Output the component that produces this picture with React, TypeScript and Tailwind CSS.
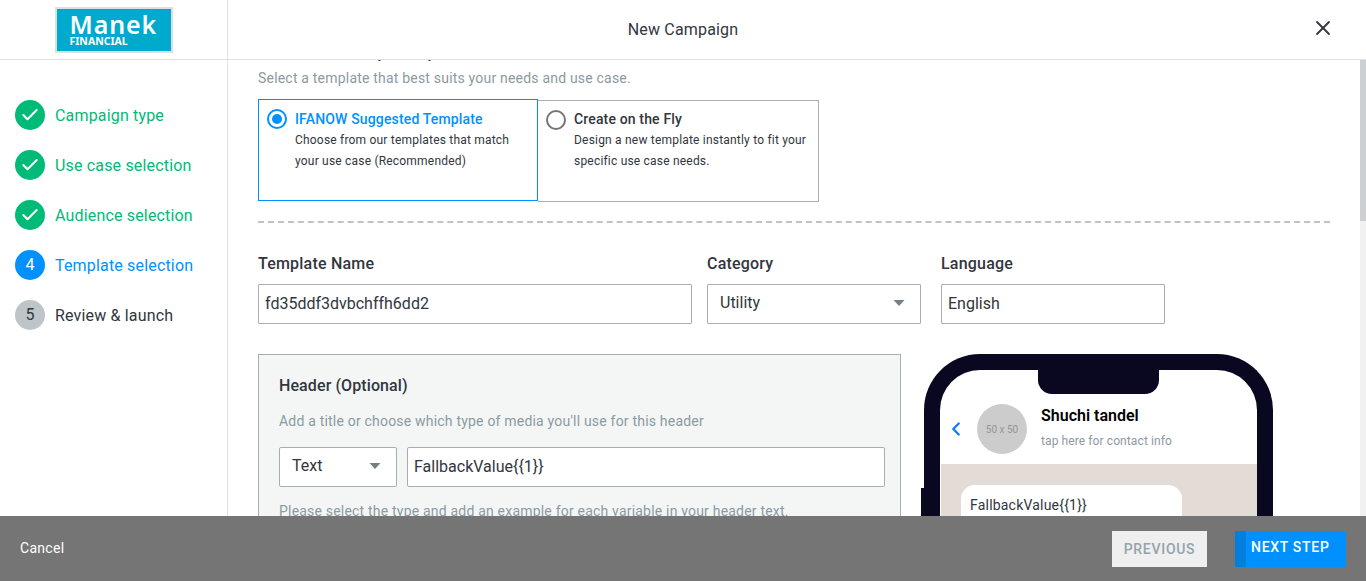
import React from "react";
import { Check, X, ChevronLeft } from "lucide-react";

const Caret = () => (
  <svg width="12" height="6" viewBox="0 0 12 6" className="shrink-0"><path d="M0.5 0H11.5L6 6Z" fill="#757f85" /></svg>
);

const steps = [
  { n: "", label: "Campaign type", state: "done" },
  { n: "", label: "Use case selection", state: "done" },
  { n: "", label: "Audience selection", state: "done" },
  { n: "4", label: "Template selection", state: "active" },
  { n: "5", label: "Review & launch", state: "todo" },
];

function Step({ s }: { s: (typeof steps)[number] }) {
  const circle = s.state === "done" ? "bg-[#00ba78] text-white" : s.state === "active" ? "bg-[#0091ff] text-white" : "bg-[#bdc5c9] text-[#32363d]";
  const text = s.state === "done" ? "text-[#00ba78]" : s.state === "active" ? "text-[#0091ff]" : "text-[#32363d]";
  return (
    <div className="flex h-[30px] items-center gap-[10px]">
      <div className={`flex h-[30px] w-[30px] items-center justify-center rounded-full text-base ${circle}`}>
        {s.state === "done" ? <Check size={20} strokeWidth={2.5} /> : s.n}
      </div>
      <span className={`pt-[2px] text-base tracking-[0.17px] ${text}`}>{s.label}</span>
    </div>
  );
}

export default function App() {
  return (
    <div className="flex h-[581px] w-[1366px] flex-col overflow-hidden bg-white font-['Roboto',sans-serif] text-[#32363d]">
      <header className="flex h-[60px] shrink-0 items-center border-b border-[#dfe1e2]">
        <div className="flex h-full w-[228px] shrink-0 items-center justify-center border-r border-[#dfe1e2]">
          <div className="flex h-[46px] w-[118px] flex-col border-2 border-[#dcdfe0] bg-[#00aacc] pl-[13px] pt-[3px] font-['Noto_Sans',sans-serif] text-white">
            <span className="text-[25px] font-semibold leading-[24px] tracking-[0.9px]">Manek</span>
            <span className="text-[10.5px] font-bold leading-[10px]">FINANCIAL</span>
          </div>
        </div>
        <div className="flex-1 text-center text-base tracking-[0.17px]">New Campaign</div>
        <div className="-mt-[3px] flex w-[228px] shrink-0 justify-end pr-[31px]">
          <X size={24} strokeWidth={1.8} />
        </div>
      </header>

      <main className="flex min-h-0 flex-1 overflow-hidden">
        <aside className="flex w-[228px] shrink-0 flex-col gap-[20px] border-r border-[#dfe1e2] pl-[15px] pt-[40px]">
          {steps.map((s) => (
            <Step key={s.label} s={s} />
          ))}
        </aside>

        <section className="min-w-0 flex-1 overflow-hidden pl-[30px] pr-[30px]">
          <h2 className="-mt-[19px] text-base font-medium leading-6 tracking-[0.2px]">Choose one template option</h2>
          <p className="mt-[3px] text-sm leading-5 tracking-[0.2px] text-[#8b9aa1]">Select a template that best suits your needs and use case.</p>

          <div className="mt-[11px] flex items-start">
            <div className="flex h-[102px] w-[280px] gap-[8px] border border-[#0091ff] pl-[8px] pt-[9px]">
              <div className="flex h-[20px] w-[20px] shrink-0 items-center justify-center rounded-full border-2 border-[#0091ff]">
                <div className="h-[10px] w-[10px] rounded-full bg-[#0091ff]" />
              </div>
              <div>
                <div className="text-sm font-medium leading-[20px] tracking-[0.15px] text-[#0091ff]">IFANOW Suggested Template</div>
                <div className="mt-px text-xs leading-[21px] tracking-[0.2px]">Choose from our templates that match<br />your use case (Recommended)</div>
              </div>
            </div>
            <div className="mt-px flex h-[102px] w-[281px] gap-[8px] border border-[#a9adaf] border-l-0 pl-[8px] pt-[9px]">
              <div className="h-[20px] w-[20px] shrink-0 rounded-full border-2 border-[#757575]" />
              <div className="-mt-px">
                <div className="text-sm font-medium leading-[20px] tracking-[0.15px]">Create on the Fly</div>
                <div className="mt-px text-xs leading-[21px] tracking-[0.2px]">Design a new template instantly to fit your<br />specific use case needs.</div>
              </div>
            </div>
          </div>

          <div className="mt-[19px] border-t-2 border-dashed border-[#bcc4c8]" />

          <div className="mt-[29px] flex">
            <div className="w-[434px]">
              <div className="text-base font-medium leading-6 tracking-[0.2px]">Template Name</div>
              <div className="mt-[8px] flex h-[40px] items-center rounded-[1px] border border-[#a9adaf] px-[6px] text-base">fd35ddf3dvbchffh6dd2</div>
            </div>
            <div className="ml-[15px] w-[214px]">
              <div className="text-base font-medium leading-6 tracking-[0.2px]">Category</div>
              <div className="mt-[8px] flex h-[40px] items-center justify-between rounded-[1px] border border-[#a9adaf] pb-[2px] pl-[12px] pr-[15px] text-base">
                Utility
                <Caret />
              </div>
            </div>
            <div className="ml-[20px] w-[224px]">
              <div className="text-base font-medium leading-6 tracking-[0.2px]">Language</div>
              <div className="mt-[8px] flex h-[40px] items-center rounded-[1px] border border-[#a9adaf] px-[6px] text-base">English</div>
            </div>
          </div>

          <div className="mt-[30px] flex items-start">
            <div className="h-[300px] w-[643px] shrink-0 border border-[#a9adaf] bg-[#f4f6f6] pl-[20px] pr-[15px] pt-[19px]">
              <div className="text-base font-medium leading-6 tracking-[0.1px]">Header (Optional)</div>
              <div className="mt-[13px] text-sm leading-5 tracking-[0.2px] text-[#8b9aa1]">Add a title or choose which type of media you'll use for this header</div>
              <div className="mt-[16px] flex gap-[10px]">
                <div className="flex h-[40px] w-[118px] shrink-0 items-center justify-between rounded-[2px] border border-[#a9adaf] bg-white pb-[2px] pl-[12px] pr-[15px] text-base">
                  Text
                  <Caret />
                </div>
                <div className="flex h-[40px] flex-1 items-center rounded-[2px] border border-[#a9adaf] bg-white px-[6px] text-base">FallbackValue{"{{1}}"}</div>
              </div>
              <div className="mt-[14px] text-sm leading-5 tracking-[0.2px] text-[#8b9aa1]">Please select the type and add an example for each variable in your header text.</div>
            </div>

            <div className="relative ml-[23px] h-[400px] w-[349px] shrink-0 rounded-t-[56px] border-[16px] border-b-0 border-[#0a0821] bg-white">
              <div className="absolute -left-[19px] top-[118px] h-[60px] w-[3px] bg-[#0a0821]" />
              <div className="absolute left-[98px] top-0 h-[24px] w-[121px] rounded-b-[14px] bg-[#0a0821]" />
              <div className="flex h-[94px] items-center pl-[7px] pt-[24px]">
                <ChevronLeft size={22} strokeWidth={2.5} className="-ml-[2px] shrink-0 text-[#0a7cff]" />
                <div className="ml-[10px] flex h-[50px] w-[50px] shrink-0 items-center justify-center rounded-full bg-[#cccccc] text-[10px] text-[#969696]">50 x 50</div>
                <div className="-mt-[3px] ml-[14px]">
                  <div className="text-base font-semibold leading-5 text-black">Shuchi tandel</div>
                  <div className="mt-[7px] text-xs leading-4 tracking-[0.1px] text-[#8b9aa1]">tap here for contact info</div>
                </div>
              </div>
              <div className="ml-px h-[200px] bg-[#e3dbd5] pl-[20px] pt-[21px]">
                <div className="h-[100px] w-[221px] rounded-[14px] bg-white pl-[9px] pt-[10px] text-sm leading-5 tracking-[0.2px]">FallbackValue{"{{1}}"}</div>
              </div>
            </div>
          </div>
        </section>

        <div className="w-[6px] shrink-0 bg-[#f1f1f1]">
          <div className="h-[161px] bg-[#ccd0d2]" />
        </div>
      </main>

      <footer className="flex h-[65px] shrink-0 items-center justify-between bg-[#757575] pl-[20px] pr-[20px]">
        <span className="pb-[2px] text-sm tracking-[0.3px] text-white">Cancel</span>
        <div className="flex items-center gap-[28px]">
          <div className="flex h-[36px] w-[95px] items-center justify-center bg-[#efefef] text-sm font-medium tracking-[0.7px] text-[#95a3ab]">PREVIOUS</div>
          <div className="flex h-[36px] w-[111px] border-l-[11px] border-[#007fdf] bg-[#0091ff] pb-[3px] pl-[5px]">
            <span className="self-center text-sm font-medium tracking-[0.7px] text-white">NEXT STEP</span>
          </div>
        </div>
      </footer>
    </div>
  );
}
